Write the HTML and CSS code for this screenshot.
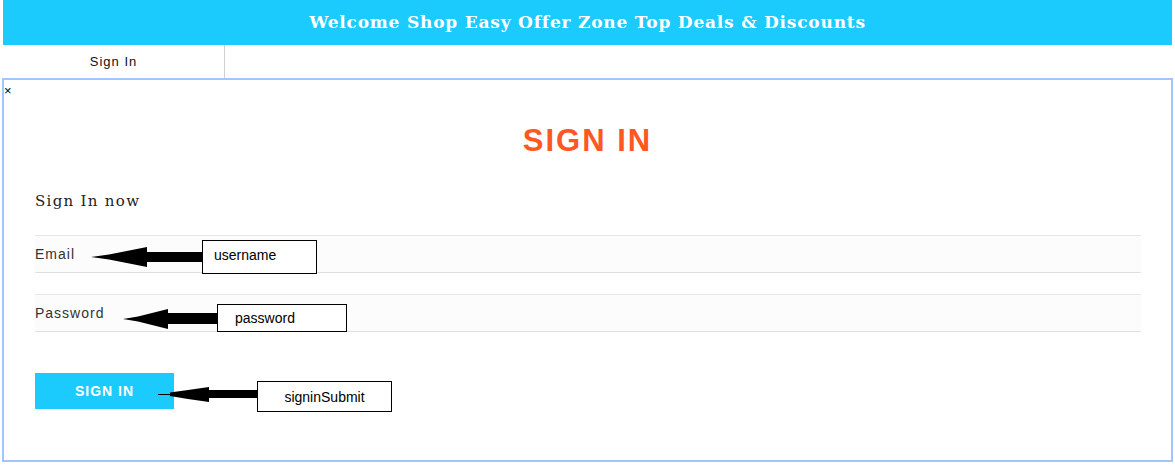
FILE: index.html
```html
<!DOCTYPE html>
<html>
<head>
<meta charset="utf-8">
<link rel="stylesheet" href="styles.css">
</head>
<body>
<header class="topbar">Welcome Shop Easy Offer Zone Top Deals &amp; Discounts</header>
<nav class="tabs"><div class="tab">Sign In</div></nav>
<section class="modal">
  <div class="close">×</div>
  <h1 class="title">SIGN IN</h1>
  <div class="content">
    <p class="subtitle">Sign In now</p>
    <div class="field"><span class="label">Email</span></div>
    <div class="field field-second"><span class="label">Password</span></div>
    <button class="submit">SIGN IN</button>
  </div>

  <svg class="arrow arrow-email" viewBox="0 0 112 20" width="112" height="20"><polygon points="0,10 18,7.5 56,0 56,5 112,5 112,15 56,15 56,20 18,12.5" fill="#000"/></svg>
  <div class="note note-user">username</div>

  <svg class="arrow arrow-pass" viewBox="0 0 94 20" width="94" height="20"><polygon points="0,10 15,7.5 45,0 45,4 94,4 94,15 45,15 45,20 15,12.5" fill="#000"/></svg>
  <div class="note note-pass">password</div>

  <svg class="arrow arrow-submit" viewBox="0 0 101 15" width="101" height="15"><polygon points="0,7 12,7 12,5.5 30,3 51,0 51,3 101,3 101,11 51,11 51,15 30,12 12,9 12,8 0,8" fill="#000"/></svg>
  <div class="note note-submit">signinSubmit</div>
</section>
</body>
</html>
```
FILE: styles.css
```css
html, body {
  margin: 0;
  padding: 0;
  background: #fff;
}

.topbar {
  margin: 0 3px;
  height: 45px;
  padding-bottom: 2px;
  box-sizing: border-box;
  background: #1ccbfe;
  color: #fff;
  font-family: "DejaVu Serif", serif;
  font-weight: bold;
  font-size: 17px;
  display: flex;
  align-items: center;
  justify-content: center;
  letter-spacing: 0.8px;
}

.tabs {
  margin: 0 3px;
  height: 33px;
  display: flex;
}

.tab {
  width: 221px;
  border-right: 1px solid #d0d0d0;
  display: flex;
  align-items: center;
  justify-content: center;
  font-family: "Liberation Sans", Arial, sans-serif;
  font-size: 13px;
  letter-spacing: 1px;
  color: #111;
}

.modal {
  position: relative;
  margin: 0 2px;
  border: 2px solid #a4c4fd;
  height: 380px;
  box-sizing: content-box;
}

.close {
  font-family: "Liberation Sans", Arial, sans-serif;
  font-size: 13px;
  line-height: 22px;
  height: 22px;
  color: #000;
}

.title {
  margin: 21px 0 0;
  text-align: center;
  font-family: "Liberation Sans", Arial, sans-serif;
  font-weight: bold;
  font-size: 31px;
  line-height: 36px;
  letter-spacing: 2px;
  color: #ff5722;
}

.content {
  padding: 0 30px 0 31px;
}

.subtitle {
  margin: 32px 0 0;
  font-family: "DejaVu Serif", serif;
  font-size: 15px;
  line-height: 20px;
  letter-spacing: 1.3px;
  color: #222;
}

.field {
  margin-top: 24px;
  height: 36px;
  border-top: 1px solid #e6e6e6;
  border-bottom: 1px solid #e0e0e0;
  background: #fcfcfc;
  display: flex;
  align-items: center;
}

.field-second {
  margin-top: 21px;
}

.label {
  font-family: "Liberation Sans", Arial, sans-serif;
  font-size: 14px;
  letter-spacing: 1px;
  color: #333;
}

.submit {
  margin-top: 41px;
  width: 139px;
  height: 36px;
  border: 0;
  padding: 0;
  background: #1ccbfe;
  color: #fff;
  font-family: "Liberation Sans", Arial, sans-serif;
  font-weight: bold;
  font-size: 14px;
  letter-spacing: 1px;
  display: block;
}

.arrow {
  position: absolute;
  display: block;
}

.arrow-email { left: 87px; top: 167px; }
.arrow-pass { left: 119px; top: 229px; }
.arrow-submit { left: 154px; top: 307px; }

.note {
  position: absolute;
  box-sizing: border-box;
  border: 1px solid #000;
  background: #fff;
  font-family: "Liberation Sans", Arial, sans-serif;
  font-size: 14px;
  color: #000;
  display: flex;
  align-items: center;
}

.note-user { left: 198px; top: 160px; width: 115px; height: 34px; padding: 0 0 4px 11px; }
.note-pass { left: 213px; top: 224px; width: 130px; height: 28px; padding-left: 17px; }
.note-submit { left: 253px; top: 301px; width: 135px; height: 31px; justify-content: center; }
```
